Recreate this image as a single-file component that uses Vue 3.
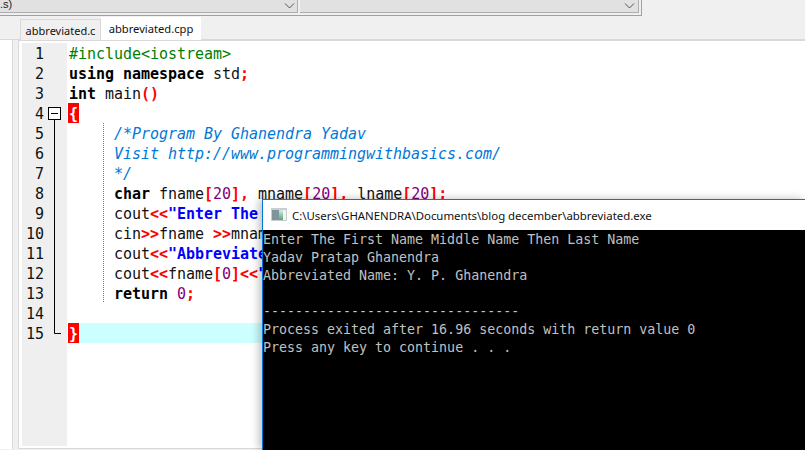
<script setup>
const lines = [
  [['pp', '#include<iostream>']],
  [['kw', 'using namespace'], ['', ' std'], ['sy', ';']],
  [['kw', 'int'], ['', ' main'], ['sy', '()']],
  [['br', '{']],
  [['', '     '], ['cm', '/*Program By Ghanendra Yadav']],
  [['', '     '], ['cm', 'Visit http://www.programmingwithbasics.com/']],
  [['', '     '], ['cm', '*/']],
  [['', '     '], ['kw', 'char'], ['', ' fname'], ['sy', '['], ['nm', '20'], ['sy', '],'], ['', ' mname'], ['sy', '['], ['nm', '20'], ['sy', '],'], ['', ' lname'], ['sy', '['], ['nm', '20'], ['sy', '];']],
  [['', '     cout'], ['sy', '<<'], ['st', '"Enter The First Name Middle Name Then Last Name"'], ['sy', ';']],
  [['', '     cin'], ['sy', '>>'], ['', 'fname '], ['sy', '>>'], ['', 'mname '], ['sy', '>>'], ['', 'lname'], ['sy', ';']],
  [['', '     cout'], ['sy', '<<'], ['st', '"Abbreviated Name: "'], ['sy', ';']],
  [['', '     cout'], ['sy', '<<'], ['', 'fname'], ['sy', '['], ['nm', '0'], ['sy', ']<<'], ['st', '". "'], ['sy', ';']],
  [['', '     '], ['kw', 'return'], ['', ' '], ['nm', '0'], ['sy', ';']],
  [],
  [['br', '}']],
]
const output = [
  'Enter The First Name Middle Name Then Last Name',
  'Yadav Pratap Ghanendra',
  'Abbreviated Name: Y. P. Ghanendra',
  '',
  '--------------------------------',
  'Process exited after 16.96 seconds with return value 0',
  'Press any key to continue . . .',
]
</script>

<template>
  <div class="app">
    <header class="toolbar">
      <div class="combos">
        <div class="combo first"><span class="combo-text">.s)</span>
          <svg class="chev" width="11" height="6" viewBox="0 0 11 6"><path d="M1 0.5 L5.5 5 L10 0.5" fill="none" stroke="#555" stroke-width="1" /></svg>
        </div>
        <div class="combo second">
          <svg class="chev" width="11" height="6" viewBox="0 0 11 6"><path d="M1 0.5 L5.5 5 L10 0.5" fill="none" stroke="#555" stroke-width="1" /></svg>
        </div>
      </div>
    </header>

    <main class="body">
      <aside class="side"></aside>
      <section class="workspace">
        <div class="tabs">
          <div class="tab">abbreviated.c</div>
          <div class="tab active">abbreviated.cpp</div>
        </div>
        <div class="editor">
          <div class="gutter">
            <div v-for="(l, i) in lines" :key="i" class="num">{{ i + 1 }}</div>
            <svg class="fold" width="16" height="232" viewBox="0 0 16 232">
              <rect x="0.5" y="0.5" width="12" height="12" fill="#fff" stroke="#000" />
              <path d="M3 6.5 H10" stroke="#000" />
              <path d="M6.5 13 V226.5 H13" fill="none" stroke="#000" />
            </svg>
          </div>
          <div class="code">
            <div v-for="(l, i) in lines" :key="i" class="line" :class="{ current: i === 14 }"><span v-for="(t, j) in l" :key="j" :class="t[0]">{{ t[1] }}</span></div>
            <div class="guide"></div>
          </div>
        </div>
      </section>
    </main>

    <div class="console">
      <div class="titlebar">
        <svg class="appicon" width="16" height="13" viewBox="0 0 16 13">
          <defs>
            <linearGradient id="iconMid" x1="0" y1="0" x2="0" y2="1">
              <stop offset="0" stop-color="#dfe9e6" />
              <stop offset="1" stop-color="#4fa67a" />
            </linearGradient>
          </defs>
          <rect x="0" y="0" width="16" height="13" fill="#c9cdcf" />
          <rect x="1" y="2" width="7" height="10" fill="#7f959c" />
          <rect x="8" y="2" width="4" height="10" fill="url(#iconMid)" />
          <rect x="12" y="2" width="3" height="10" fill="#f3f5f5" />
        </svg>
        <span class="title">C:\Users\GHANENDRA\Documents\blog december\abbreviated.exe</span>
      </div>
      <div class="output">
        <div v-for="(o, i) in output" :key="i" class="oline">{{ o }}</div>
      </div>
    </div>
  </div>
</template>

<style>
html, body { margin: 0; overflow: hidden; background: #f0f0f0; }
</style>

<style scoped>
.app {
  position: relative;
  width: 805px;
  height: 450px;
  overflow: hidden;
  background: #f0f0f0;
  display: flex;
  flex-direction: column;
}
.toolbar { height: 39px; flex: none; border-bottom: 1px solid #d9d9d9; box-sizing: content-box; }
.combos {
  width: 642px;
  height: 16px;
  box-sizing: border-box;
  display: flex;
  gap: 2px;
  padding-right: 2px;
  border-right: 1px solid #a0a0a0;
  border-bottom: 1px solid #a0a0a0;
  padding-bottom: 3px;
}
.combo {
  height: 13px;
  box-sizing: border-box;
  background: #e1e1e1;
  border: solid #adadad;
  border-width: 0 1px 1px 0;
  display: flex;
  align-items: flex-end;
  justify-content: flex-end;
  position: relative;
  padding: 0 3px 3px 0;
}
.first { width: 298px; padding-right: 2px; }
.second { flex: 1; }
.combo-text {
  position: absolute; left: 0; top: -2px;
  font: 11px "Liberation Sans", sans-serif; color: #222;
}
.body { flex: 1; display: flex; min-height: 0; background: #f0f0f0; }
.side {
  width: 12px; flex: none; margin-bottom: 1px;
  background: #fff; border-right: 1px solid #d9d9d9;
}
.workspace { flex: 1; margin-left: 5px; min-width: 0; display: flex; flex-direction: column; position: relative; margin-top: -24px; }
.tabs { height: 24px; flex: none; display: flex; align-items: flex-end; padding-left: 2px; }
.tab {
  height: 21px; width: 81px; box-sizing: border-box;
  background: #f0f0f0; border: 1px solid #d9d9d9; border-bottom: 0;
  font: 11px/21px "Noto Sans", sans-serif; color: #111; text-align: center;
  white-space: nowrap;
}
.tab.active { height: 23px; width: 100px; background: #fff; border-width: 0; line-height: 23px; font-size: 11.2px; }
.editor {
  flex: 1; display: flex; background: #fff; min-height: 0;
  border-left: 1px solid #d9d9d9; border-top: 1px solid #d9d9d9; border-bottom: 1px solid #d9d9d9;
  margin-bottom: 1px;
  padding-top: 2px;
  padding-left: 3px;
}
.gutter {
  position: relative; width: 45px; flex: none; background: #efefef;
  margin-bottom: 2px;
}
.num {
  height: 20px; width: 22px; text-align: right;
  font: 15px/22px "DejaVu Sans Mono", monospace; color: #111;
}
.fold { position: absolute; left: 26px; top: 64px; }
.code { position: relative; flex: 1; padding-left: 1px; min-width: 0; }
.line {
  height: 20px; white-space: pre; padding-left: 1px;
  font: 15px/22px "DejaVu Sans Mono", monospace; color: #111;
  letter-spacing: -0.03px;
}
.current { background: #ccffff; }
.kw { font-weight: 700; color: #000; }
.pp { color: #008000; }
.sy { font-weight: 700; color: #ff0000; }
.nm { color: #800080; }
.st { font-weight: 700; color: #0000ff; }
.cm { font-style: italic; color: #0078d7; }
.br { display: inline-block; height: 20px; width: 11px; margin-left: -1px; background: #ff0000; color: #fff; font-weight: 700; text-align: center; vertical-align: top; }
.guide { position: absolute; left: 36px; top: 80px; height: 179px; border-left: 1px dotted #777; }
.console {
  position: absolute; left: 262px; top: 199px; width: 543px; height: 251px;
  border-left: 1px solid #0078d7; box-sizing: border-box;
  box-shadow: -3px 0 8px rgba(0,0,0,.25);
  display: flex; flex-direction: column; background: #000;
}
.titlebar {
  height: 31px; flex: none; background: #fff; display: flex; align-items: center;
  padding-left: 8px; gap: 5px; border-top: 1px solid #0078d7; box-sizing: border-box;
}
.appicon { flex: none; margin-bottom: 2px; }
.title { font: 11.4px "Noto Sans", sans-serif; color: #111; white-space: nowrap; }
.output { flex: 1; padding-top: 1px; }
.oline {
  height: 18px; white-space: pre; color: #c0c0c0;
  font: 13.3px/18px "DejaVu Sans Mono", monospace;
}
</style>
